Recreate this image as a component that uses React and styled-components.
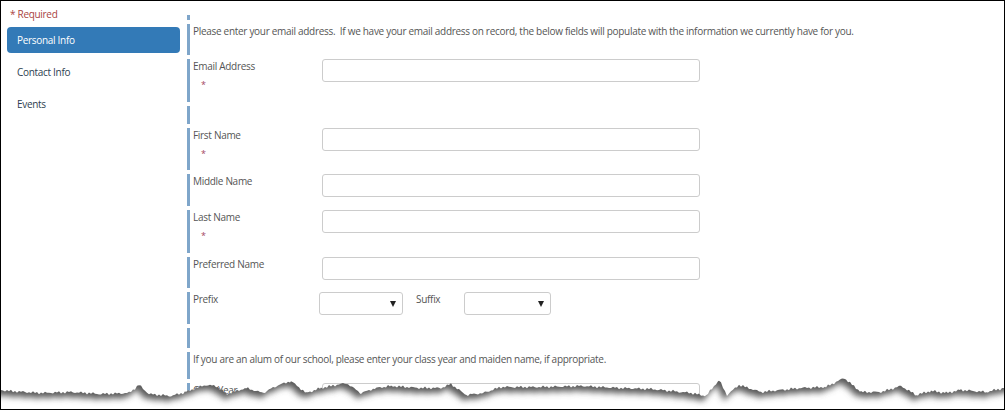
import React from "react";
import styled, { createGlobalStyle } from "styled-components";

const GlobalStyle = createGlobalStyle`
  html, body {
    margin: 0;
    padding: 0;
    background: #fff;
  }
  body {
    font-family: "Open Sans", "Noto Sans", Arial, sans-serif;
    font-size: 10px;
    letter-spacing: -0.3px;
    color: #555;
  }
  * {
    box-sizing: border-box;
  }
`;

const Frame = styled.div`
  position: relative;
  width: 1005px;
  height: 410px;
  border: 1px solid #000;
  overflow: hidden;
  display: grid;
  grid-template-columns: 173px 1fr;
  column-gap: 7px;
  padding-left: 6px;
  background: #fff;
`;

const Sidebar = styled.aside`
  padding-top: 6px;
`;

const Required = styled.div`
  color: #a94442;
  line-height: 14px;
  padding-left: 3px;
  margin-bottom: 6px;
`;

const NavList = styled.nav`
  display: flex;
  flex-direction: column;
  gap: 6px;
`;

const NavItem = styled.a`
  display: flex;
  align-items: center;
  height: 26px;
  padding-left: 10px;
  border-radius: 4px;
  text-decoration: none;
  color: ${(p) => (p.$active ? "#fff" : "#2d3e50")};
  background: ${(p) => (p.$active ? "#337ab7" : "transparent")};
`;

const Main = styled.main`
  padding-top: 14px;
  display: flex;
  flex-direction: column;
  gap: 4px;
`;

const Row = styled.div`
  display: flex;
  align-items: flex-start;
  height: ${(p) => p.$h}px;
  flex-shrink: 0;
  border-left: 3px solid #7fa6ca;
  padding-left: 3px;
`;

const Note = styled.p`
  margin: 0;
  line-height: 14px;
`;

const LabelCol = styled.div`
  width: ${(p) => p.$w || 129}px;
  flex-shrink: 0;
`;

const Label = styled.label`
  display: block;
  line-height: 14px;
`;

const Star = styled.span`
  display: block;
  color: #a3475e;
  font-size: 9px;
  margin: 5px 0 0 8px;
  line-height: 14px;
`;

const TextInput = styled.input`
  width: 378px;
  height: 23px;
  border: 1px solid #ccc;
  border-radius: 3px;
  background: #fff;
  margin: 0;
`;

const SelectBox = styled.div`
  width: ${(p) => p.$w}px;
  height: 23px;
  border: 1px solid #ccc;
  border-radius: 3px;
  display: flex;
  align-items: center;
  justify-content: flex-end;
  padding-right: 6px;
`;

const Arrow = styled.span`
  width: 0;
  height: 0;
  border-left: 3.5px solid transparent;
  border-right: 3.5px solid transparent;
  border-top: 6px solid #222;
`;

const InlineLabel = styled.label`
  width: 48px;
  margin-left: 13px;
  line-height: 14px;
`;

const TornSvg = styled.svg`
  position: absolute;
  left: 0;
  bottom: 0;
`;

const keyPoints = [
  [0, 390], [8, 391], [40, 393], [70, 392], [100, 394], [128, 393],
  [138, 385], [148, 394], [170, 396], [185, 392], [195, 388], [205, 385],
  [215, 386], [226, 394], [245, 388], [262, 393], [275, 386], [290, 381],
  [305, 393], [320, 388], [345, 383], [360, 393], [375, 388], [390, 386],
  [420, 388], [440, 388], [450, 384], [465, 395], [482, 393], [500, 387],
  [540, 387], [580, 386], [620, 388], [650, 389], [690, 393], [705, 396],
  [718, 380], [726, 395], [738, 385], [760, 392], [800, 388], [825, 387],
  [843, 378], [860, 392], [880, 392], [900, 386], [915, 395], [930, 391],
  [945, 393], [960, 390], [985, 392], [1003, 388],
];

const TOP = 369;

function edgePoints() {
  const pts = [];
  for (let i = 0; i < keyPoints.length - 1; i++) {
    const [x0, y0] = keyPoints[i];
    const [x1, y1] = keyPoints[i + 1];
    for (let x = x0; x < x1; x += 2) {
      const t = (x - x0) / (x1 - x0);
      const jitter = Math.sin(x * 1.7) * 0.9 + Math.sin(x * 0.53) * 0.6;
      pts.push([x, y0 + (y1 - y0) * t + jitter - TOP]);
    }
  }
  const last = keyPoints[keyPoints.length - 1];
  pts.push([last[0], last[1] - TOP]);
  return pts;
}

const TornEdge = () => {
  const pts = edgePoints();
  const edge = pts.map(([x, y]) => `${x},${y.toFixed(1)}`).join(" L");
  const below = `M-5,45 L-5,${pts[0][1]} L${edge} L1010,${pts[pts.length - 1][1]} L1010,45 Z`;
  const above = `M-5,-5 L-5,${pts[0][1]} L${edge} L1010,${pts[pts.length - 1][1]} L1010,-5 Z`;
  return (
    <TornSvg width="1003" height="40" viewBox="0 0 1003 40">
      <defs>
        <clipPath id="belowEdge">
          <path d={below} />
        </clipPath>
        <filter id="soft" x="-5%" y="-50%" width="110%" height="200%">
          <feGaussianBlur stdDeviation="3" />
        </filter>
      </defs>
      <path d={below} fill="#fff" />
      <g clipPath="url(#belowEdge)">
        <path d={above} fill="#5a5a5a" filter="url(#soft)" transform="translate(-3, 5)" />
      </g>
    </TornSvg>
  );
};

const TextField = ({ label, required, h }) => (
  <Row $h={h}>
    <LabelCol>
      <Label>{label}</Label>
      {required && <Star>*</Star>}
    </LabelCol>
    <TextInput type="text" />
  </Row>
);

export default function App() {
  return (
    <>
      <GlobalStyle />
      <Frame>
        <Sidebar>
          <Required>* Required</Required>
          <NavList>
            <NavItem $active>Personal Info</NavItem>
            <NavItem>Contact Info</NavItem>
            <NavItem>Events</NavItem>
          </NavList>
        </Sidebar>
        <Main>
          <Row $h={5} />
          <Row $h={31}>
            <Note>
              Please enter your email address.&nbsp; If we have your email address on record, the below fields will
              populate with the information we currently have for you.
            </Note>
          </Row>
          <Row $h={43}>
            <LabelCol>
              <Label>Email Address</Label>
              <Star>*</Star>
            </LabelCol>
            <TextInput type="email" />
          </Row>
          <Row $h={18} />
          <TextField label="First Name" required h={42} />
          <TextField label="Middle Name" h={32} />
          <TextField label="Last Name" required h={43} />
          <TextField label="Preferred Name" h={31} />
          <Row $h={32}>
            <LabelCol $w={126}>
              <Label>Prefix</Label>
            </LabelCol>
            <SelectBox $w={84}>
              <Arrow />
            </SelectBox>
            <InlineLabel>Suffix</InlineLabel>
            <SelectBox $w={87}>
              <Arrow />
            </SelectBox>
          </Row>
          <Row $h={20} />
          <Row $h={27}>
            <Note>
              If you are an alum of our school, please enter your class year and maiden name, if appropriate.
            </Note>
          </Row>
          <TextField label="Class Year" h={31} />
        </Main>
        <TornEdge />
      </Frame>
    </>
  );
}
